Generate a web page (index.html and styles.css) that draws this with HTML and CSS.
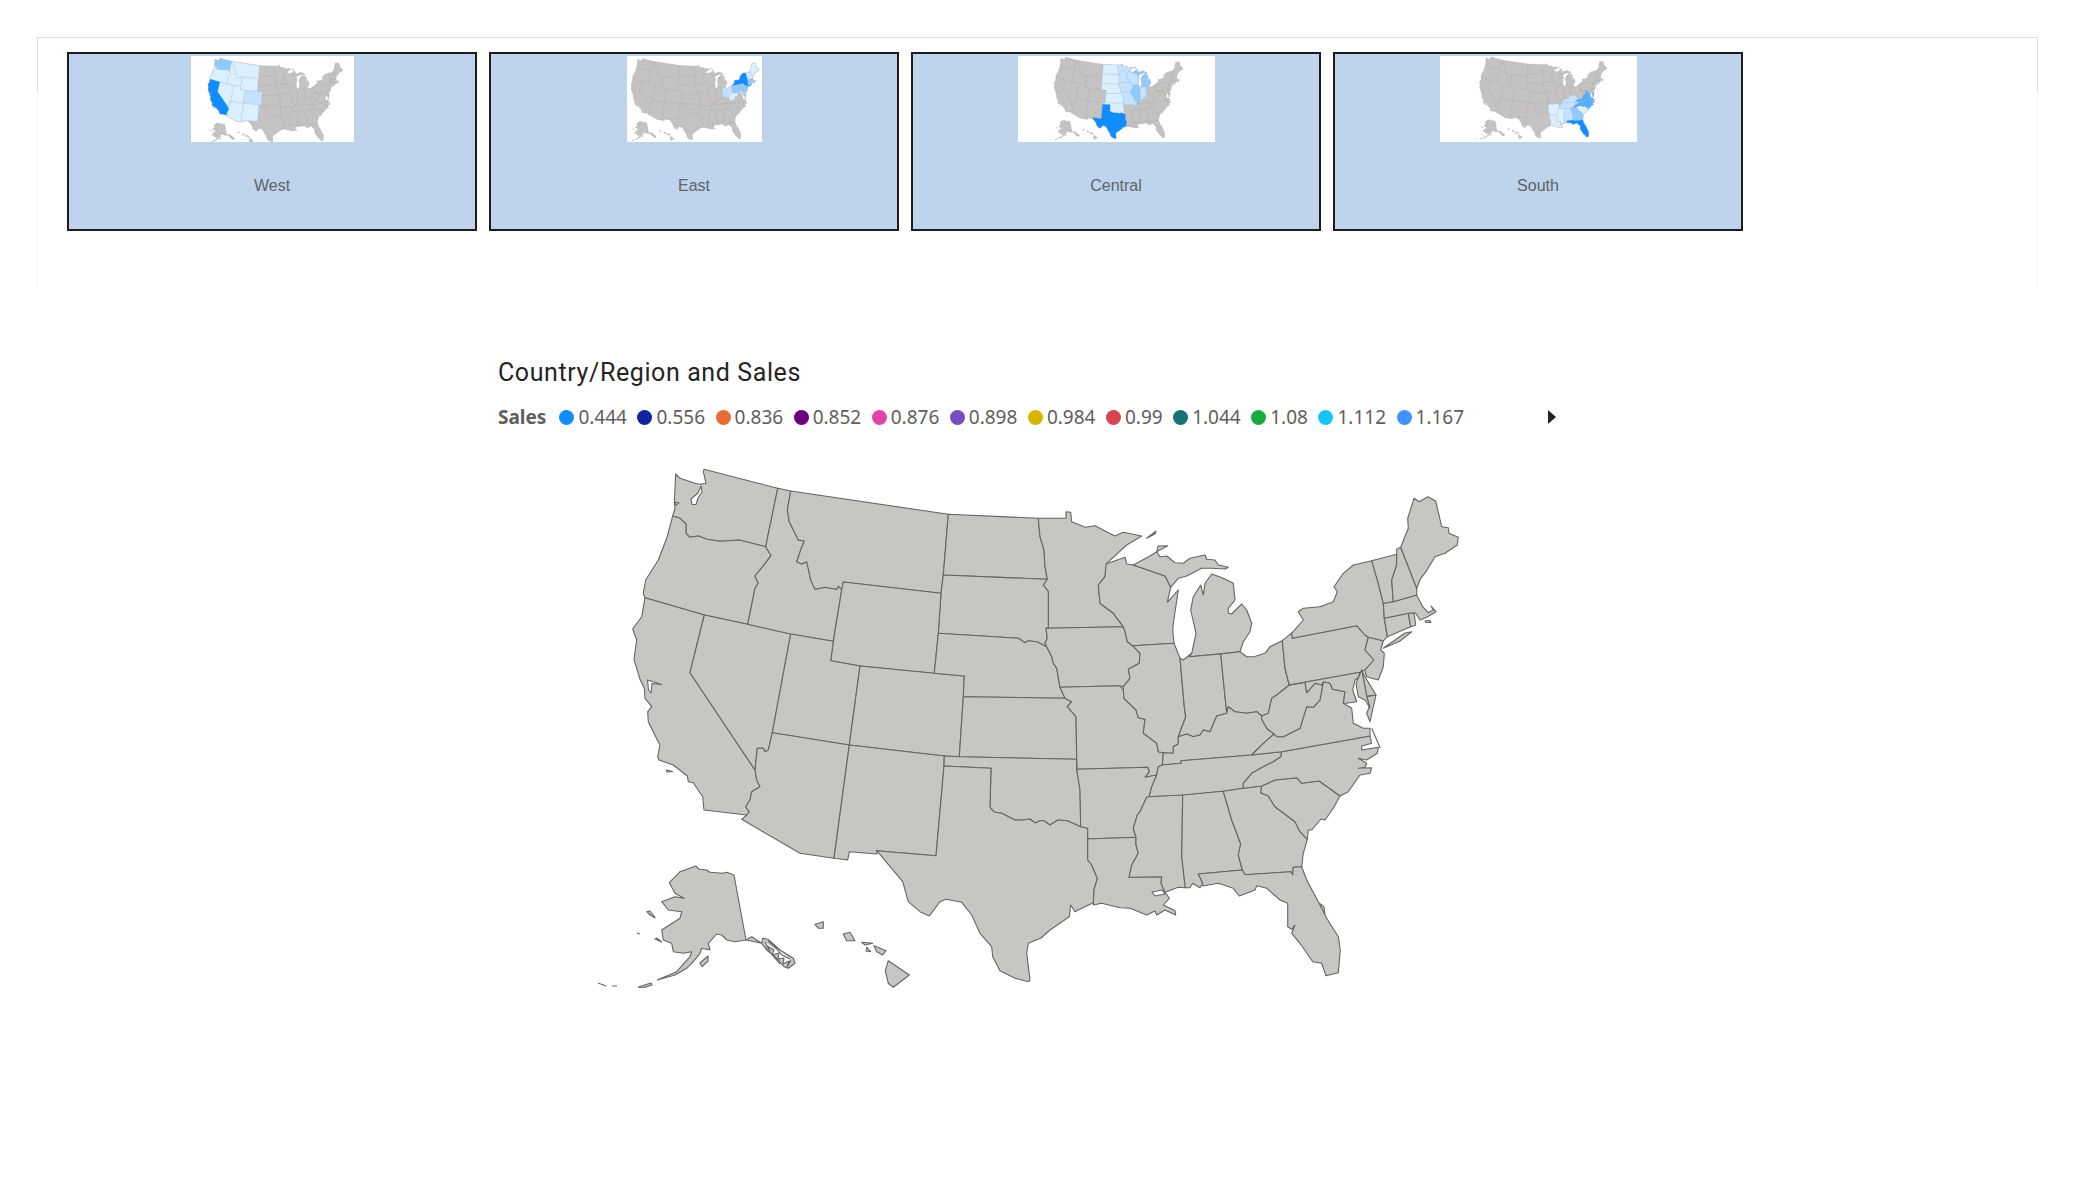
FILE: index.html
```html
<!DOCTYPE html>
<html lang="en">
<head>
    <meta charset="UTF-8">
    <title>Country/Region and Sales</title>
    <link rel="stylesheet" href="styles.css">
</head>
<body>
    <svg class="defs" width="0" height="0" aria-hidden="true">
        <defs>
            <g id="usa">
                <path id="wa" d="M704,469.3 L777.7,488.3 L765.7,546.7 L739.3,540 L720,541.3 L707,539.3 L698.3,536 L690,537.3 L686,533.3 L686,524 L680,518.3 L672.7,516 L675,508.3 L674.3,501.7 L675.7,474 L680,478.3 L695,483.3 L700,484.3 L706,483.3 L703.3,471.7 Z M701,486 L698,493 L691,499 L692,504.5 L696,504.5 L698,498 L702,492 Z M675,502 L679,503 L676,505 Z"/>
                <path id="or" d="M672.7,516 L680,518.3 L686,524 L686,533.3 L690,537.3 L698.3,536 L707,539.3 L720,541.3 L739.3,540 L765.7,546.7 L771,555.7 L762.7,566.7 L755,576 L758.3,583.3 L755,588.3 L747.7,624.3 L704.3,615 L645,597.7 L643.3,593.3 L645.7,580 L658.3,560 L666.7,538.3 Z"/>
                <path id="ca" d="M645,597.7 L704.3,615 L690,672.7 L755,770 L756.7,780 L760,786.7 L751.7,791.7 L750,800 L745.7,806.7 L749.3,811.7 L746.7,815 L704,810 L702.7,796.7 L693.3,782.7 L688.3,781.7 L687.3,776 L673.3,765 L659,760 L657.7,756.7 L660,745 L657.3,740 L648.3,721.7 L647.7,711.7 L651.7,706.7 L645,698.3 L644.3,688.3 L640,679.3 L634,659.3 L636.7,640 L632.7,629 L641.7,616.7 Z M647.5,680 L661.7,684.5 L652,683.5 L651,693 L648.5,690 Z M666.5,770 L672.5,771.5 L667,772 Z"/>
                <path id="nv" d="M704.3,615 L747.7,624.3 L790.7,634 L772.3,732.7 L768.3,750 L765,751.7 L763.3,748.3 L757.3,748.3 L755,770 L690,672.7 Z"/>
                <path id="id" d="M777.7,488.3 L790.7,491 L787.3,510 L789.3,521.7 L798.3,540 L804.3,541 L800.7,550 L796.7,561.7 L801.7,564 L806.7,561.7 L810.7,580 L815,589.3 L825,587.3 L836.7,589.3 L838.3,586 L841.7,590 L833.3,641.3 L790.7,634 L747.7,624.3 L755,588.3 L758.3,583.3 L755,576 L762.7,566.7 L771,555.7 L765.7,546.7 Z"/>
                <path id="mt" d="M790.7,491 L948.3,514.3 L943.3,575 L941,593.3 L843.3,582 L841.7,590 L838.3,586 L836.7,589.3 L825,587.3 L815,589.3 L810.7,580 L806.7,561.7 L801.7,564 L796.7,561.7 L800.7,550 L804.3,541 L798.3,540 L789.3,521.7 L787.3,510 Z"/>
                <path id="nd" d="M948.3,514.3 L1038.3,518.3 L1040,536.7 L1044,550 L1045,566.7 L1047.3,579.3 L943.3,575 Z"/>
                <path id="mn" d="M1038.3,518.3 L1066,518.3 L1066,511.7 L1070.7,512.3 L1071.7,521.7 L1085,527.3 L1095,525.7 L1105,531 L1115,536 L1123.3,532.3 L1141.7,536 L1126.7,545 L1106.7,563.3 L1105,576.7 L1098.3,585 L1100,603.3 L1113.3,613.3 L1123.3,626.7 L1046,628.3 L1048.3,627.7 L1048.3,591.7 L1043.3,585 L1047.3,579.3 L1045,566.7 L1044,550 L1040,536.7 Z"/>
                <path id="sd" d="M943.3,575 L1047.3,579.3 L1043.3,585 L1048.3,591.7 L1048.3,627.7 L1046,628.3 L1047.3,638.3 L1045,643 L1046.7,646.7 L1036.7,641.7 L1028.3,640.7 L1025,642.7 L1018.3,638.3 L938.3,633.3 L941,593.3 Z"/>
                <path id="wy" d="M843.3,582 L941,593.3 L938.3,633.3 L934.3,673.3 L860,666 L830.7,660.7 L833.3,641.3 L841.7,590 Z"/>
                <path id="ut" d="M790.7,634 L833.3,641.3 L830.7,660.7 L860,666 L849.3,745 L772.3,732.7 Z"/>
                <path id="co" d="M860,666 L934.3,673.3 L964.3,676 L963.3,696.7 L959.3,756.7 L944.3,756 L849.3,745 Z"/>
                <path id="ne" d="M938.3,633.3 L1018.3,638.3 L1025,642.7 L1028.3,640.7 L1036.7,641.7 L1046.7,646.7 L1051.7,656.7 L1053.3,663.3 L1056.7,668.3 L1060,687.3 L1065,698.3 L963.3,696.7 L964.3,676 L934.3,673.3 Z"/>
                <path id="ks" d="M963.3,696.7 L1065,698.3 L1071.7,701.7 L1067.3,706.7 L1076,716.7 L1076.7,759.3 L959.3,756.7 Z"/>
                <path id="az" d="M772.3,732.7 L849.3,745 L834,858.3 L800,853.3 L741.7,819.3 L746.7,815 L749.3,811.7 L745.7,806.7 L750,800 L751.7,791.7 L760,786.7 L756.7,780 L755,770 L757.3,748.3 L763.3,748.3 L765,751.7 L768.3,750 Z"/>
                <path id="nm" d="M849.3,745 L944.3,756 L944,766 L936,855.7 L876.7,850.7 L877,854 L849.3,851.7 L847.7,860 L834,858.3 Z"/>
                <path id="ok" d="M944.3,756 L959.3,756.7 L1076.7,759.3 L1076.7,769.3 L1080,790 L1080.7,826.7 L1067.3,820.7 L1058,820 L1050,825 L1044,820.7 L1040,820.7 L1035,823 L1030,819 L1023.3,820 L1015,820 L1001.7,813.3 L994,812 L990,807.3 L991,768.3 L944,766 Z"/>
                <path id="tx" d="M944,766 L991,768.3 L990,807.3 L994,812 L1001.7,813.3 L1015,820 L1023.3,820 L1030,819 L1035,823 L1040,820.7 L1044,820.7 L1050,825 L1058,820 L1067.3,820.7 L1080.7,826.7 L1087.7,828.3 L1087.7,860 L1091.7,865 L1097.3,878.3 L1094,890 L1093.3,902.7 L1081.7,908.3 L1075,911.7 L1070.7,905 L1069.3,916.7 L1050,930 L1041,938 L1028.3,943.3 L1026.7,953.3 L1030,980 L1028.3,981.7 L1015,978.3 L1000,970.7 L992.7,956.7 L991.7,946.7 L980,933.3 L971.7,915 L961.7,902.3 L946,899.3 L940,901.7 L929.3,916 L920,911.7 L908.3,901.7 L902.7,881.7 L876.7,850.7 L936,855.7 Z"/>
                <path id="ia" d="M1046,628.3 L1123.3,626.7 L1125,631.7 L1127.3,641.7 L1132.7,645.7 L1140,653.3 L1139.3,663.3 L1128.3,669.3 L1130,678.3 L1123.3,686.7 L1119.3,685.7 L1060,687.3 L1056.7,668.3 L1053.3,663.3 L1051.7,656.7 L1046.7,646.7 L1045,643 L1047.3,638.3 Z"/>
                <path id="mo" d="M1060,687.3 L1119.3,685.7 L1123.3,689.3 L1124,698.3 L1136,710 L1138.3,717.7 L1145,719.3 L1143.3,733.3 L1156.7,743.3 L1158.3,751.7 L1163.3,752.7 L1162.3,765 L1158.3,766.7 L1156.7,775 L1145,777.3 L1149.3,771.7 L1147.7,767.3 L1077.3,769.3 L1076.7,759 L1076,716.7 L1067.3,706.7 L1071.7,701.7 L1065,698.3 Z"/>
                <path id="ar" d="M1077.3,769.3 L1147.7,767.3 L1149.3,771.7 L1145,777.3 L1156.7,775 L1156,776.7 L1151.7,786.7 L1149.3,796.7 L1146.7,797.3 L1140,811.7 L1137.3,815 L1133.3,828.3 L1136,837.3 L1087.7,839 L1087.7,828.3 L1080.7,826.7 L1080,790 L1076.7,769.3 Z"/>
                <path id="la" d="M1087.7,839 L1136,837.3 L1136,845 L1138.3,853.3 L1131.7,865 L1129,877.3 L1161.7,876.7 L1161,883.3 L1165,892.3 L1169.3,898.3 L1163.3,905 L1175,910.7 L1175.7,915 L1165,910 L1156.7,915 L1155,911 L1146.7,915 L1130,908.3 L1120,907.7 L1101.7,903.3 L1093.3,905 L1094,890 L1097.3,878.3 L1091.7,865 L1087.7,860 Z M1152,892 L1162,890 L1165,894 L1155,896 Z"/>
                <path id="wi" d="M1106,564 L1125,557.3 L1126.7,564 L1133.3,565 L1165,576 L1170.7,587.3 L1167.3,602.3 L1178.3,590 L1173.3,623.3 L1172.7,630 L1174,643.3 L1132.7,645.7 L1127.3,641.7 L1125,631.7 L1123.3,626.7 L1113.3,613.3 L1100,603.3 L1098.3,585 L1105,576.7 Z"/>
                <path id="mi" d="M1133.3,565 L1150,556 L1156.7,551.7 L1160,556.7 L1166.7,556 L1175,562.7 L1183.3,563.3 L1190,558.3 L1205,555 L1206.7,559.3 L1215,560 L1218.3,565 L1228.3,567.3 L1225,569 L1211.7,568.3 L1201.7,568.3 L1186.7,576 L1178.3,578.3 L1170.7,587.3 L1165,576 Z M1189.3,656.7 L1240,651.7 L1243.3,641.7 L1250,631.7 L1251.7,623.3 L1246.7,610 L1241.7,604 L1231.7,614 L1228.3,613.3 L1228.3,608.3 L1235,600 L1233.3,583.3 L1223.3,578.3 L1211.7,574 L1205,583.3 L1203.3,595 L1200.7,585 L1193.3,596.7 L1190.7,610 L1196,633.3 L1191.7,653.3 Z M1156.7,551.7 L1158,546 L1167.7,545.7 L1160,550 Z M1146.7,538.3 L1156,531 L1155,534 Z"/>
                <path id="il" d="M1132.7,645.7 L1174,643.3 L1180,658.3 L1184.3,706.7 L1185.7,716.7 L1178.3,736.7 L1178.3,744 L1173.3,746.7 L1173.3,753.3 L1163.3,752.7 L1158.3,751.7 L1156.7,743.3 L1143.3,733.3 L1145,719.3 L1138.3,717.7 L1136,710 L1124,698.3 L1123.3,689.3 L1123.3,686.7 L1130,678.3 L1128.3,669.3 L1139.3,663.3 L1140,653.3 Z"/>
                <path id="in" d="M1180,658.3 L1183.3,660 L1191.7,653.3 L1189.3,656.7 L1220.7,654 L1226.7,713.3 L1216.7,716 L1210,731.7 L1203.3,730 L1200,735 L1193.3,736.7 L1186.7,734 L1178.3,736.7 L1185.7,716.7 L1184.3,706.7 Z"/>
                <path id="oh" d="M1220.7,654 L1240,651.7 L1246.7,656.7 L1254,656.7 L1265,653.3 L1270,646.7 L1282.3,640.7 L1285,668.3 L1289.3,685 L1276.7,695 L1271.7,698.3 L1268.3,713.3 L1261.7,716 L1256.7,711.7 L1246.7,713.3 L1235,711.7 L1228.3,706.7 L1226.7,713.3 Z"/>
                <path id="ky" d="M1226.7,713.3 L1228.3,706.7 L1235,711.7 L1246.7,713.3 L1256.7,711.7 L1261.7,716 L1261.7,719.3 L1266.7,728.3 L1274,734 L1260,746.7 L1251.7,755 L1181,760.7 L1181,763.3 L1162.3,765 L1163.3,752.7 L1173.3,753.3 L1173.3,746.7 L1178.3,744 L1178.3,736.7 L1186.7,734 L1193.3,736.7 L1200,735 L1203.3,730 L1210,731.7 L1216.7,716 Z"/>
                <path id="tn" d="M1158.3,766.7 L1162.3,765 L1181,763.3 L1181,760.7 L1251.7,755 L1281.7,751.7 L1281,756.7 L1273.3,761.7 L1263.3,766.7 L1251.7,773.3 L1243.3,783.3 L1243.3,788.3 L1223.3,791.3 L1182.7,795.3 L1149.3,796.7 L1151.7,786.7 L1156,776.7 L1156.7,775 Z"/>
                <path id="ms" d="M1149.3,796.7 L1182.7,795 L1181.7,856.7 L1185.3,887.7 L1178.3,887.3 L1165,892.3 L1161,883.3 L1161.7,876.7 L1129,877.3 L1131.7,865 L1138.3,853.3 L1136,845 L1136,837.3 L1133.3,828.3 L1137.3,815 L1140,811.7 L1146.7,797.3 Z"/>
                <path id="al" d="M1182.7,795 L1223.3,791.3 L1231.7,820 L1240.7,844 L1238.3,855 L1242.3,870 L1198.3,874 L1202.7,883.3 L1200,887.7 L1192.7,883.3 L1190,887.7 L1185.3,887.7 L1181.7,856.7 Z"/>
                <path id="ga" d="M1223.3,791.3 L1243.3,788.3 L1261.7,786 L1260.7,792.7 L1268.3,796 L1275,806.7 L1295,821.7 L1300,831.7 L1307.3,839.3 L1303.3,853.3 L1301.7,866.7 L1293.3,867.3 L1292.7,875 L1291,871.7 L1245,874.7 L1242.3,870 L1238.3,855 L1240.7,844 L1231.7,820 Z"/>
                <path id="sc" d="M1261.7,786 L1275,780 L1296.7,777.7 L1301.7,783.3 L1319.3,781 L1340,796 L1333.3,808.3 L1325,820 L1321,819 L1311.7,830 L1308.3,830 L1307.3,839.3 L1300,831.7 L1295,821.7 L1275,806.7 L1268.3,796 L1260.7,792.7 Z"/>
                <path id="nc" d="M1281.7,751.7 L1370,736 L1371.7,743.3 L1361.7,746 L1361.7,750 L1378.3,747.3 L1377.3,753.3 L1366.7,760 L1358.3,758.3 L1366.7,763.3 L1365,767.3 L1358.3,768.3 L1371.7,767.7 L1370,773.3 L1360,775 L1348.3,791.7 L1340,796 L1319.3,781 L1301.7,783.3 L1296.7,777.7 L1275,780 L1261.7,786 L1243.3,788.3 L1243.3,783.3 L1251.7,773.3 L1263.3,766.7 L1273.3,761.7 L1281,756.7 Z M1371.7,728.3 L1380.3,748.3"/>
                <path id="fl" d="M1245,874.7 L1291,871.7 L1292.7,875 L1293.3,867.3 L1301.7,866.7 L1306.7,880 L1320,905 L1326.7,918.3 L1338.3,936.7 L1340.3,950 L1338.3,972.7 L1326,975.7 L1321.7,963.3 L1312.7,961.7 L1300,943.3 L1291.7,933.3 L1295,925 L1291.7,929.3 L1287.7,926.7 L1287.7,903.3 L1280,900 L1266.7,888.3 L1256.7,885.7 L1255,890 L1239.3,896 L1233.3,888.3 L1218.3,883.3 L1202.7,886 L1202.7,883.3 L1198.3,874 L1242.3,870 Z M1319,903 L1324,907 L1325,915"/>
                <path id="va" d="M1251.7,755 L1281.7,751.7 L1370,736 L1370,728.3 L1363.3,728.3 L1353.3,723.3 L1351.7,708.3 L1343.3,703.3 L1345,691.7 L1332.7,689.3 L1330,683.3 L1323.3,681.7 L1320,700 L1313.3,707.3 L1306.7,706.7 L1300,728.3 L1283.3,736.7 L1276.7,736.7 L1274,734 L1260,746.7 Z M1376,695 L1370,721.7 L1366.7,713.3 L1369.3,706.7 L1366.7,696.7 Z"/>
                <path id="wv" d="M1285,668.3 L1289.3,685 L1305,682.3 L1306.7,692.7 L1315,683.3 L1321.7,685 L1323.3,681.7 L1320,700 L1313.3,707.3 L1306.7,706.7 L1300,728.3 L1283.3,736.7 L1276.7,736.7 L1274,734 L1266.7,728.3 L1261.7,719.3 L1261.7,716 L1268.3,713.3 L1271.7,698.3 L1276.7,695 L1289.3,685 Z"/>
                <path id="pa" d="M1282.3,640.7 L1292,632.7 L1292.3,638.3 L1356.7,625.7 L1365,635 L1368.3,637.3 L1365,650 L1374,660 L1365,670 L1360,672.3 L1289.3,685 L1285,668.3 Z"/>
                <path id="ny" d="M1292.3,638.3 L1356.7,625.7 L1365,635 L1368.3,637.3 L1383.3,641 L1387.3,636.7 L1384.3,618.3 L1383.3,603.3 L1378.3,583.3 L1371.7,560.7 L1353.3,565 L1343.3,573.3 L1334,586.7 L1337.3,591.7 L1333.3,601.7 L1320,606.7 L1303.3,608.3 L1298.3,611.7 L1303.3,620 L1291.7,633.3 Z M1383.3,648.3 L1395,640 L1405,633 L1411.7,631.7 L1400,641 Z"/>
                <path id="nj" d="M1368.3,637.3 L1383.3,641 L1380.7,650 L1384.3,653.3 L1383.3,666.7 L1378.3,680 L1366.7,676.7 L1365,671.7 L1365,670 L1374,660 L1365,650 Z"/>
                <path id="de" d="M1361.7,670 L1365,676.7 L1376,695 L1366.7,696 Z"/>
                <path id="md" d="M1289.3,685 L1360,672.3 L1358,678 L1355,680 L1352.7,690 L1356.7,701.7 L1346.7,703.3 L1343.3,703.3 L1345,691.7 L1332.7,689.3 L1330,683.3 L1323.3,681.7 L1321.7,685 L1315,683.3 L1306.7,692.7 L1305,682.3 Z M1361.7,670 L1366.7,696 L1370,708 L1365,700 L1358.3,696.7 L1356,683.3 Z"/>
                <path id="ct" d="M1384.3,618.3 L1408.3,613.3 L1410.7,626.7 L1387.3,636.7 Z"/>
                <path id="ri" d="M1408.3,613.3 L1414,612.7 L1415.7,625 L1410.7,626.7 Z"/>
                <path id="ma" d="M1383.3,603.3 L1393.3,601.7 L1416.7,595 L1422.7,606.7 L1428.3,612.7 L1433.3,610 L1431,606 L1436,611.7 L1426.7,617.3 L1420,620 L1415.7,613.3 L1414,612.7 L1408.3,613.3 L1384.3,618.3 Z M1425,621 L1430,620.5 L1431,622.5 L1426,622.5 Z"/>
                <path id="vt" d="M1371.7,560.7 L1396.7,554.3 L1396.7,565 L1391.7,580 L1393.3,601.7 L1383.3,603.3 L1378.3,583.3 Z"/>
                <path id="nh" d="M1396.7,549.3 L1400.7,547.3 L1416.7,588.3 L1416.7,595 L1393.3,601.7 L1391.7,580 L1396.7,565 Z"/>
                <path id="me" d="M1400.7,547.3 L1408.3,528.3 L1407.7,518.3 L1414,498.3 L1419.3,501.7 L1427.7,496.7 L1435.7,501 L1441.7,526.7 L1448.3,527.7 L1449,533.3 L1458.3,537.3 L1457.3,545 L1445,553.3 L1435,556.7 L1430,565 L1426,571.7 L1420.7,578.3 L1416.7,588.3 Z"/>
                <path id="ak" d="M695.7,866 L699.3,869.3 L706.7,870 L710,872.3 L723.3,873.3 L726.7,872.3 L734,875 L746,940 L735,941.7 L726.7,940 L721.7,935 L716.7,934 L708.3,943.3 L710,950 L701.7,948.3 L700,953.3 L693.3,961.7 L686.7,968.3 L675,975 L657.3,980 L676.7,971.7 L690,956.7 L691.7,951.7 L683.3,953.3 L673.3,951.7 L671.7,943.3 L663.3,940 L661.7,930 L680,918.3 L681.7,911.7 L668.3,910 L661.7,901.7 L675,896.7 L684,898.3 L675,893.3 L669.3,882.7 L680,871.7 Z M746,940 L751.7,936.7 L761.7,943.3 L756,942 Z M646.7,911.7 L650,911 L655,917.7 L650,915 Z M656.7,938 L661.7,942 L655,939 Z M700,963 L708,956 L708,961 L702,966.7 Z M638.3,987 L651,983 L652,985 L642,988 Z M598,983 L606,986 M612,986 L617,986 M637,933 L640,934"/>
                <path id="ak2" d="M762.7,938.3 L768.3,939.3 L780,950 L793.3,958.3 L795,963.3 L788.3,968.3 L784,966.7 L775,956.7 L766.7,950 L761.7,943.3 Z M765,942 L770,951 L767,946 L774,950 L772,955 L779,953 L778,959 L784,958 L783,964 L789,961 L787,967 L791,960 M768,941 L776,948 L782,955 L790,959 M764,946 L773,956 L780,964"/>
                <path id="hi" d="M815,924.3 L823.3,921.7 L823.3,928.3 L818.3,928.3 Z M843.3,934 L850,932.3 L855,940.7 L846.7,940.7 Z M861.7,942.3 L872.7,943.3 L865,945 Z M874,945.7 L886,950.7 L882.7,955 L876.7,951.7 Z M866.7,947.3 L870.7,951.7 L866,951 Z M888.3,960.7 L909.3,975 L893.3,987.3 L888.3,983.3 L885.3,970.7 Z"/>
            </g>
        </defs>
    </svg>

    <section class="frame">
        <div class="card">
            <svg class="thumb thumb-west" viewBox="528 455 1000 528" preserveAspectRatio="none">
                <use href="#usa" class="base"/>
                <use href="#wa" class="hi2"/>
                <use href="#or" class="hi4"/><use href="#nv" class="hi4"/><use href="#id" class="hi4"/>
                <use href="#mt" class="hi4"/><use href="#wy" class="hi4"/><use href="#ut" class="hi4"/>
                <use href="#co" class="hi3"/><use href="#az" class="hi4"/><use href="#nm" class="hi4"/>
                <use href="#ca" class="hi1"/>
            </svg>
            <div class="label">West</div>
        </div>
        <div class="card">
            <svg class="thumb thumb-east" viewBox="607 454 871 542" preserveAspectRatio="none">
                <use href="#usa" class="base"/>
                <use href="#me" class="hi4"/><use href="#vt" class="hi4"/><use href="#nh" class="hi4"/>
                <use href="#oh" class="hi3"/><use href="#wv" class="hi4"/><use href="#md" class="hi3"/>
                <use href="#de" class="hi3"/><use href="#nj" class="hi2"/><use href="#ct" class="hi2"/>
                <use href="#ma" class="hi2"/><use href="#ri" class="hi3"/>
                <use href="#pa" class="hi2"/>
                <use href="#ny" class="hi1"/>
            </svg>
            <div class="label">East</div>
        </div>
        <div class="card">
            <svg class="thumb thumb-central" viewBox="401 461 1263 542" preserveAspectRatio="none">
                <use href="#usa" class="base"/>
                <use href="#nd" class="hi4"/><use href="#sd" class="hi4"/><use href="#ne" class="hi4"/>
                <use href="#ks" class="hi4"/><use href="#ok" class="hi4"/><use href="#ia" class="hi3"/>
                <use href="#mn" class="hi3"/><use href="#mo" class="hi3"/><use href="#wi" class="hi3"/>
                <use href="#in" class="hi3"/><use href="#il" class="hi2"/><use href="#mi" class="hi2"/>
                <use href="#tx" class="hi1"/>
            </svg>
            <div class="label">Central</div>
        </div>
        <div class="card">
            <svg class="thumb thumb-south" viewBox="376 463 1279 544" preserveAspectRatio="none">
                <use href="#usa" class="base"/>
                <use href="#ar" class="hi4"/><use href="#la" class="hi4"/><use href="#ms" class="hi4"/>
                <use href="#sc" class="hi4"/><use href="#al" class="hi3"/><use href="#ky" class="hi3"/>
                <use href="#tn" class="hi3"/><use href="#ga" class="hi2"/>
                <use href="#va" class="hi5"/><use href="#nc" class="hi5"/>
                <use href="#fl" class="hi1"/>
            </svg>
            <div class="label">South</div>
        </div>
    </section>

    <section class="visual">
        <h2 class="title">Country/Region and Sales</h2>
        <div class="legend">
            <span class="legend-name">Sales</span>
            <span class="item"><i class="dot c1"></i>0.444</span>
            <span class="item"><i class="dot c2"></i>0.556</span>
            <span class="item"><i class="dot c3"></i>0.836</span>
            <span class="item"><i class="dot c4"></i>0.852</span>
            <span class="item"><i class="dot c5"></i>0.876</span>
            <span class="item"><i class="dot c6"></i>0.898</span>
            <span class="item"><i class="dot c7"></i>0.984</span>
            <span class="item"><i class="dot c8"></i>0.99</span>
            <span class="item"><i class="dot c9"></i>1.044</span>
            <span class="item"><i class="dot c10"></i>1.08</span>
            <span class="item"><i class="dot c11"></i>1.112</span>
            <span class="item"><i class="dot c12"></i>1.167</span>
            <span class="arrow"></span>
        </div>
        <svg class="map" viewBox="590 460 900 528" width="900" height="528">
            <use href="#usa"/>
        </svg>
    </section>
</body>
</html>
```

FILE: styles.css
```css
*{
    margin: 0px;
    padding: 0px;
    box-sizing: border-box;
}
body{
    background-color: white;
    font-family: "Liberation Sans", Arial, sans-serif;
}
.defs{
    display: block;
    height: 0;
}

/* top strip with the region cards */
.frame{
    position: relative;
    display: flex;
    gap: 12px;
    height: 250px;
    margin: 37px 37px 0px 37px;
    padding: 14px 0px 0px 29px;
    border: 1px solid #f5f5f5;
    border-top-color: #e3e3e3;
    border-bottom: none;
}
.frame::before{
    content: "";
    position: absolute;
    top: -1px;
    left: -1px;
    right: -1px;
    height: 54px;
    border: 1px solid #dcdcdc;
    border-bottom: none;
}
.card{
    display: flex;
    flex-direction: column;
    align-items: center;
    width: 410px;
    height: 179px;
    padding-top: 2px;
    background-color: #bed4ec;
    border: 2px solid #1c1c1c;
}
.thumb{
    display: block;
    height: 86px;
    background-color: white;
    fill-rule: evenodd;
    stroke-linejoin: round;
    filter: blur(0.3px);
}
.thumb-west{ width: 163px; }
.thumb-east{ width: 135px; }
.thumb-central{ width: 197px; }
.thumb-south{ width: 197px; }
.base{
    fill: #c4c3c1;
    stroke: #aeadab;
    stroke-width: 3px;
}
.hi1{ fill: #118dff; stroke: #118dff; stroke-width: 2px; }
.hi2{ fill: #8fcaff; stroke: #9cbcd8; stroke-width: 2px; }
.hi3{ fill: #c4e2ff; stroke: #a6c3dc; stroke-width: 2px; }
.hi4{ fill: #dcefff; stroke: #a9c6e0; stroke-width: 2px; }
.hi5{ fill: #56acff; stroke: #7db2e0; stroke-width: 2px; }
.label{
    margin-top: 35px;
    font-size: 16px;
    line-height: 18px;
    color: #5f6266;
}

/* map visual */
.visual{
    margin: 71px 0px 0px 498px;
}
.title{
    font-family: Roboto, sans-serif;
    font-size: 25px;
    font-weight: 400;
    line-height: 30px;
    letter-spacing: 0.6px;
    color: #252423;
}
.legend{
    display: flex;
    align-items: center;
    width: 1058px;
    height: 24px;
    margin-top: 17px;
    font-family: "Noto Sans", sans-serif;
    font-size: 19px;
    line-height: 24px;
    color: #605e5c;
}
.legend-name{
    margin-right: 13px;
    font-weight: 700;
}
.item{
    display: flex;
    align-items: center;
    margin-right: 10.5px;
}
.dot{
    display: block;
    width: 15px;
    height: 15px;
    margin-right: 4px;
    border-radius: 50%;
}
.c1{ background-color: #118dff; }
.c2{ background-color: #12239e; }
.c3{ background-color: #e66c37; }
.c4{ background-color: #6b007b; }
.c5{ background-color: #e044a7; }
.c6{ background-color: #744ec2; }
.c7{ background-color: #d9b300; }
.c8{ background-color: #d64550; }
.c9{ background-color: #197278; }
.c10{ background-color: #1aab40; }
.c11{ background-color: #15c6f4; }
.c12{ background-color: #4092ff; }
.arrow{
    width: 0px;
    height: 0px;
    margin-left: auto;
    border-style: solid;
    border-width: 7px 0px 7px 8px;
    border-color: transparent transparent transparent #252423;
}
.map{
    display: block;
    margin: 31px 0px 0px 92px;
    fill: #c8c6c3;
    fill-rule: evenodd;
    stroke: #666564;
    stroke-width: 1.1px;
    stroke-linejoin: round;
}
```
